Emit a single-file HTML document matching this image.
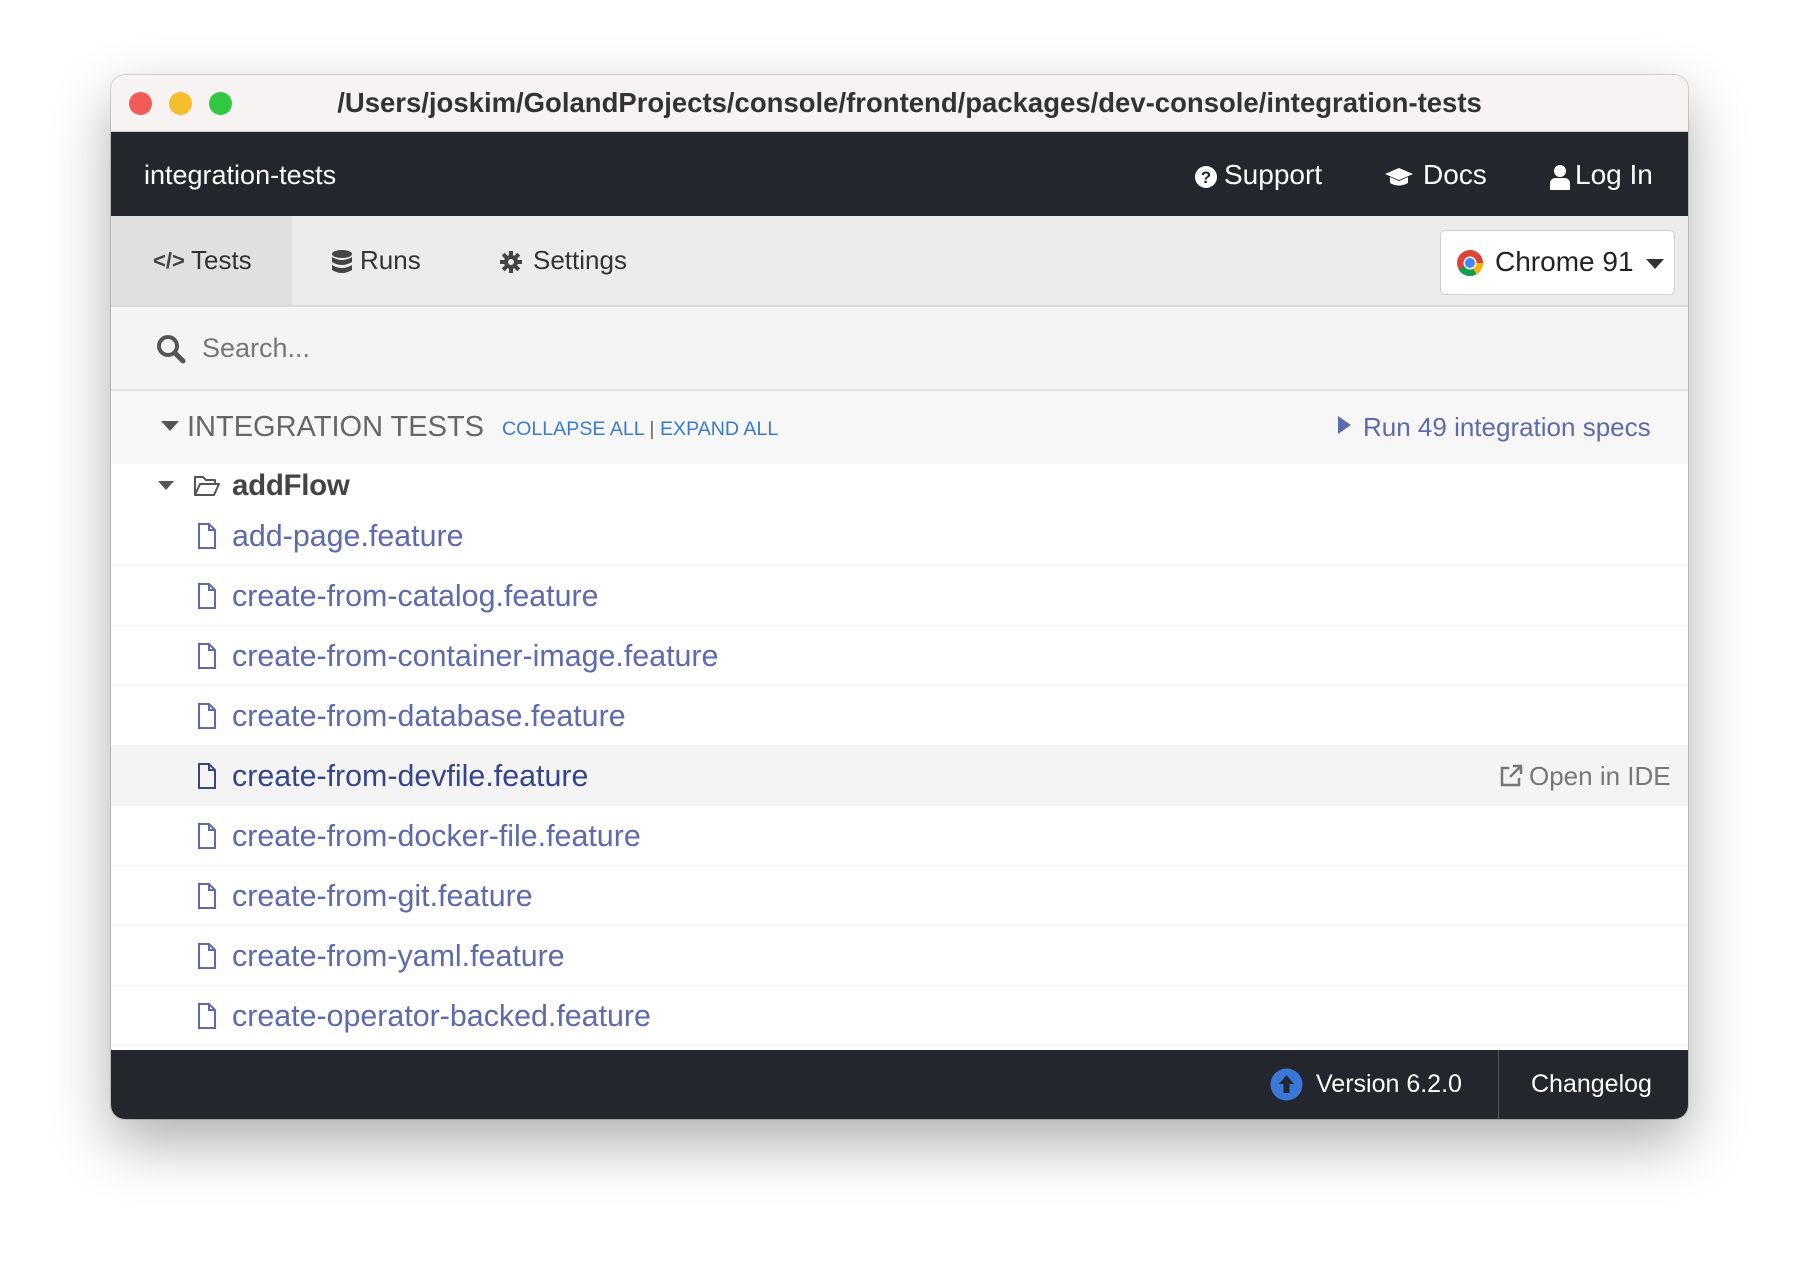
<!DOCTYPE html>
<html><head><meta charset="utf-8"><style>
*{margin:0;padding:0;box-sizing:border-box}
body{width:1800px;height:1268px;background:#fff;font-family:"Liberation Sans",Arial,sans-serif;position:relative;overflow:hidden}
.win{position:absolute;left:111px;top:75px;width:1577px;height:1044px;border-radius:14px;overflow:hidden;background:#fff;box-shadow:0 24px 60px rgba(0,0,0,.32),0 0 0 1px rgba(0,0,0,.15)}
.a{position:absolute}
.title{left:0;top:0;width:100%;height:57px;background:#f7f3f2;border-bottom:1px solid #ccc}
.tl{position:absolute;top:17px;width:23px;height:23px;border-radius:50%}
.nav{left:0;top:57px;width:100%;height:84px;background:#23262d;color:#fff}
.tabs{left:0;top:141px;width:100%;height:91px;background:#ececec;border-bottom:2px solid #dcdcdc}
.tab{position:absolute;top:0;height:89px;line-height:89px;font-size:26px;color:#333}
.search{left:0;top:232px;width:100%;height:84px;background:#f4f4f4;border-bottom:2px solid #e2e2e2}
.hdr{left:0;top:316px;width:100%;height:73px;background:#f7f7f8}
.row{position:absolute;left:0;width:100%;height:60px;border-bottom:1px solid #f5f5f5}
.row span{position:absolute;left:121px;top:13px;font-size:30.4px;color:#5d6aab}
.row svg{position:absolute;left:86px;top:17px}
.foot{left:0;top:975px;width:100%;height:69px;background:#23262d;color:#fff;font-size:25px}
</style></head><body>
<div class="win">
 <div class="a title">
  <div class="tl" style="left:18px;background:#f25b56"></div>
  <div class="tl" style="left:58px;background:#f6bd2f"></div>
  <div class="tl" style="left:98px;background:#2fc840"></div>
  <div class="a" style="left:0;width:100%;top:12px;text-align:center;font-size:27.5px;font-weight:bold;color:#333;padding-left:20px">/Users/joskim/GolandProjects/console/frontend/packages/dev-console/integration-tests</div>
 </div>
 <div class="a nav">
  <div class="a" style="left:33px;top:28px;font-size:27px">integration-tests</div>
  <svg class="a" style="left:1083px;top:33px" width="24" height="24" viewBox="0 0 24 24"><circle cx="12" cy="12" r="11" fill="#fff"/><text x="12" y="18" text-anchor="middle" font-size="17" font-weight="bold" fill="#23262d" font-family="Liberation Sans">?</text></svg>
  <div class="a" style="left:1113px;top:27px;font-size:28px">Support</div>
  <svg class="a" style="left:1273px;top:35px" width="30" height="20" viewBox="0 0 30 20"><path d="M15 1 L29 7 L15 13 L1 7Z" fill="#fff"/><path d="M6 10 v6 q9 5 18 0 v-6 l-9 4z" fill="#fff"/></svg>
  <div class="a" style="left:1312px;top:27px;font-size:28px">Docs</div>
  <svg class="a" style="left:1438px;top:32px" width="22" height="26" viewBox="0 0 22 26"><circle cx="11" cy="7" r="6" fill="#fff"/><path d="M1 26 v-6 q0-6 6-6 h8 q6 0 6 6 v6z" fill="#fff"/></svg>
  <div class="a" style="left:1464px;top:27px;font-size:28px">Log In</div>
 </div>
 <div class="a tabs">
  <div class="tab" style="left:0;width:181px;background:#e0e0e0"></div>
  <div class="tab" style="left:42px;font-size:22px;font-weight:bold;color:#444">&lt;/&gt;</div>
  <div class="tab" style="left:80px">Tests</div>
  <svg class="a" style="left:221px;top:34px" width="20" height="24" viewBox="0 0 20 24"><ellipse cx="10" cy="4" rx="10" ry="4" fill="#444"/><path d="M0 7 q10 6 20 0 v5 q-10 6 -20 0z M0 15 q10 6 20 0 v5 q-10 6 -20 0z" fill="#444"/></svg>
  <div class="tab" style="left:249px">Runs</div>
  <svg class="a" style="left:389px;top:35px" width="22" height="22" viewBox="0 0 22 22"><g fill="#444"><circle cx="11" cy="11" r="7"/><rect x="9" y="0" width="4" height="22"/><rect x="0" y="9" width="22" height="4"/><rect x="9" y="0" width="4" height="22" transform="rotate(45 11 11)"/><rect x="9" y="0" width="4" height="22" transform="rotate(-45 11 11)"/></g><circle cx="11" cy="11" r="3" fill="#ececec"/></svg>
  <div class="tab" style="left:422px">Settings</div>
  <div class="a" style="left:1329px;top:14px;width:235px;height:65px;background:#fff;border:1px solid #cfcfcf;border-radius:5px">
   <svg class="a" style="left:15px;top:18px" width="28" height="28" viewBox="0 0 28 28"><circle cx="14" cy="14" r="13" fill="#db4437"/><path d="M14 14 L2.7 20.5 A13 13 0 0 0 20.5 25.3z" fill="#0f9d58"/><path d="M14 14 L20.5 25.3 A13 13 0 0 0 27 14z" fill="#f4b400"/><circle cx="14" cy="14" r="6.5" fill="#fff"/><circle cx="14" cy="14" r="5" fill="#4285f4"/></svg>
   <div class="a" style="left:54px;top:15px;font-size:28px;color:#222">Chrome 91</div>
   <div class="a" style="left:205px;top:28px;width:0;height:0;border-left:9px solid transparent;border-right:9px solid transparent;border-top:10px solid #333"></div>
  </div>
 </div>
 <div class="a search">
  <svg class="a" style="left:45px;top:27px" width="30" height="30" viewBox="0 0 30 30"><circle cx="12" cy="12" r="9" fill="none" stroke="#555" stroke-width="4"/><path d="M19 19 L27 27" stroke="#555" stroke-width="5" stroke-linecap="round"/></svg>
  <div class="a" style="left:91px;top:26px;font-size:27px;color:#777">Search...</div>
 </div>
 <div class="a hdr">
  <div class="a" style="left:50px;top:30px;width:0;height:0;border-left:9px solid transparent;border-right:9px solid transparent;border-top:10px solid #555"></div>
  <div class="a" style="left:76px;top:20px;font-size:29px;color:#666">INTEGRATION TESTS</div>
  <div class="a" style="left:391px;top:27px;font-size:19.6px;color:#3a7bd0">COLLAPSE ALL <span style="color:#666">|</span> EXPAND ALL</div>
  <div class="a" style="left:1227px;top:25px;width:0;height:0;border-top:9px solid transparent;border-bottom:9px solid transparent;border-left:13px solid #5d6aab"></div>
  <div class="a" style="left:1252px;top:21px;font-size:26px;color:#5d6aab">Run 49 integration specs</div>
 </div>
 <div class="a" style="left:47px;top:406px;width:0;height:0;border-left:8px solid transparent;border-right:8px solid transparent;border-top:9px solid #555"></div>
 <svg class="a" style="left:82px;top:400px" width="28" height="22" viewBox="0 0 28 22"><path d="M2 20 V2 H10 L13 5 H22 V9 M2 20 L7 9 H26 L21 20Z" fill="none" stroke="#555" stroke-width="2" stroke-linejoin="round"/></svg>
 <div class="a" style="left:121px;top:394px;font-size:29.5px;color:#444;font-weight:bold;letter-spacing:-0.3px">addFlow</div>
 <div class="row" style="top:431px"><svg width="20" height="26" viewBox="0 0 20 26"><path d="M2 1 H12 L18 7 V25 H2Z M12 1 V7 H18" fill="none" stroke="#5d6aab" stroke-width="2"/></svg><span>add-page.feature</span></div>
 <div class="row" style="top:491px"><svg width="20" height="26" viewBox="0 0 20 26"><path d="M2 1 H12 L18 7 V25 H2Z M12 1 V7 H18" fill="none" stroke="#5d6aab" stroke-width="2"/></svg><span>create-from-catalog.feature</span></div>
 <div class="row" style="top:551px"><svg width="20" height="26" viewBox="0 0 20 26"><path d="M2 1 H12 L18 7 V25 H2Z M12 1 V7 H18" fill="none" stroke="#5d6aab" stroke-width="2"/></svg><span>create-from-container-image.feature</span></div>
 <div class="row" style="top:611px"><svg width="20" height="26" viewBox="0 0 20 26"><path d="M2 1 H12 L18 7 V25 H2Z M12 1 V7 H18" fill="none" stroke="#5d6aab" stroke-width="2"/></svg><span>create-from-database.feature</span></div>
 <div class="row" style="top:671px;background:#f4f4f5"><svg width="20" height="26" viewBox="0 0 20 26"><path d="M2 1 H12 L18 7 V25 H2Z M12 1 V7 H18" fill="none" stroke="#34458a" stroke-width="2"/></svg><span style="color:#34458a">create-from-devfile.feature</span>
  <svg style="left:1388px;top:18px" width="24" height="24" viewBox="0 0 24 24"><path d="M10 4 H3 V21 H20 V14" fill="none" stroke="#777" stroke-width="2.5"/><path d="M14 2 H22 V10 M22 2 L11 13" fill="none" stroke="#777" stroke-width="2.5"/></svg>
  <span style="left:1418px;top:15px;color:#777;font-size:26px">Open in IDE</span></div>
 <div class="row" style="top:731px"><svg width="20" height="26" viewBox="0 0 20 26"><path d="M2 1 H12 L18 7 V25 H2Z M12 1 V7 H18" fill="none" stroke="#5d6aab" stroke-width="2"/></svg><span>create-from-docker-file.feature</span></div>
 <div class="row" style="top:791px"><svg width="20" height="26" viewBox="0 0 20 26"><path d="M2 1 H12 L18 7 V25 H2Z M12 1 V7 H18" fill="none" stroke="#5d6aab" stroke-width="2"/></svg><span>create-from-git.feature</span></div>
 <div class="row" style="top:851px"><svg width="20" height="26" viewBox="0 0 20 26"><path d="M2 1 H12 L18 7 V25 H2Z M12 1 V7 H18" fill="none" stroke="#5d6aab" stroke-width="2"/></svg><span>create-from-yaml.feature</span></div>
 <div class="row" style="top:911px"><svg width="20" height="26" viewBox="0 0 20 26"><path d="M2 1 H12 L18 7 V25 H2Z M12 1 V7 H18" fill="none" stroke="#5d6aab" stroke-width="2"/></svg><span>create-operator-backed.feature</span></div>
 <div class="a foot">
  <svg class="a" style="left:1159px;top:18px" width="33" height="33" viewBox="0 0 33 33"><circle cx="16.5" cy="16.5" r="16" fill="#3a78d8"/><path d="M16.5 7 L24 16 H19.5 V25 H13.5 V16 H9Z" fill="#23262d"/></svg>
  <div class="a" style="left:1205px;top:20px">Version 6.2.0</div>
  <div class="a" style="left:1387px;top:0;width:1px;height:69px;background:#555"></div>
  <div class="a" style="left:1420px;top:20px">Changelog</div>
 </div>
</div>
</body></html>
